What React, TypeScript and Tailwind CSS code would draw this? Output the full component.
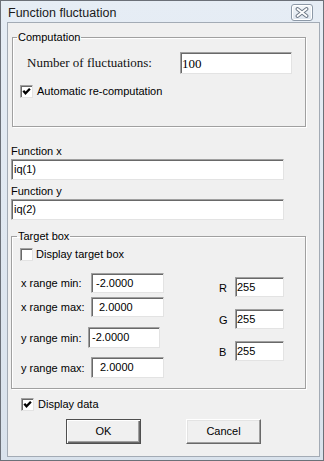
import React from "react";

const sans = { fontFamily: '"Liberation Sans", Arial, sans-serif' };

function Box({
  cls,
  value,
  pad,
  serif,
}: {
  cls: string;
  value: string;
  pad: string;
  serif?: boolean;
}) {
  return (
    <div
      className={`bg-white border border-[#e3e3e3] border-t-[#a0a0a0] border-l-[#a0a0a0] shadow-[inset_1px_1px_0_#696969] flex items-center text-black ${cls} ${pad} ${
        serif ? "text-[13px] font-['Liberation_Serif',serif]" : "text-[11px]"
      }`}
    >
      <span className="whitespace-pre leading-none">{value}</span>
    </div>
  );
}

function Check({ checked }: { checked: boolean }) {
  return (
    <span className="w-[13px] h-[13px] shrink-0 bg-white border border-[#e3e3e3] border-t-[#a0a0a0] border-l-[#a0a0a0] shadow-[inset_1px_1px_0_#696969] relative">
      {checked && (
        <svg
          className="absolute left-0 top-0"
          width="11"
          height="11"
          viewBox="0 0 11 11"
        >
          <path
            d="M2.3 4.8 L4.5 7.3 L8.9 2.7"
            fill="none"
            stroke="#000"
            strokeWidth="2.3"
          />
        </svg>
      )}
    </span>
  );
}

export default function App() {
  return (
    <div
      style={sans}
      className="w-[324px] h-[461px] border border-[#6b7078] bg-gradient-to-b from-[#e6edf5] to-[#d9e2ec] flex flex-col text-[11px] text-black"
    >
      {/* title bar */}
      <div className="h-[21px] shrink-0 flex items-start justify-between pl-[7px] pr-[10px]">
        <span className="pt-[5px] text-[12.5px] leading-[15px] text-[#1a1a1a]">
          Function fluctuation
        </span>
        <div className="mt-[3px] w-[22px] h-[17px] rounded-[3px] border border-[#8d99a7] bg-gradient-to-b from-[#f4f7fa] to-[#dde5ee] shadow-[inset_0_0_0_1px_#ffffff] flex items-center justify-center">
          <svg width="14" height="11" viewBox="0 0 14 11">
            <path
              d="M2.5 2 L11.5 9 M11.5 2 L2.5 9"
              stroke="#6f7a88"
              strokeWidth="3.8"
              strokeLinecap="round"
            />
            <path
              d="M2.5 2 L11.5 9 M11.5 2 L2.5 9"
              stroke="#ffffff"
              strokeWidth="1.8"
              strokeLinecap="round"
            />
          </svg>
        </div>
      </div>

      {/* content */}
      <div className="ml-[6px] mr-[3px] mb-[3px] flex-1 border border-[#a3abb5] bg-[#f0f0f0] flex flex-col">
        {/* Computation */}
        <fieldset className="mt-[7px] ml-[4px] w-[294px] h-[97px] border border-[#a0a0a0] shadow-[inset_1px_1px_0_#ffffff,1px_1px_0_#ffffff] shrink-0">
          <legend className="ml-[4px] px-[1px] leading-[14px] text-[11px]">
            Computation
          </legend>
          <div className="mt-[8px] flex items-center pl-[14px]">
            <span className="w-[153px] text-[13px] font-['Liberation_Serif',serif] leading-[16px] text-[#111]">
              Number of fluctuations:
            </span>
            <Box cls="w-[112px] h-[22px]" value="100" pad="pl-[1px] pt-[1px]" serif />
          </div>
          <div className="mt-[11px] flex items-center h-[13px] pl-[7px] gap-[4px]">
            <Check checked />
            <span className="leading-[13px]">Automatic re-computation</span>
          </div>
        </fieldset>

        {/* Function x / y */}
        <div className="pl-[3px] shrink-0">
          <div className="mt-[17px] leading-[14px]">Function x</div>
          <Box cls="mt-[1px] w-[273px] h-[21px]" value="iq(1)" pad="pl-[2px]" />
          <div className="mt-[4px] leading-[14px]">Function y</div>
          <Box cls="mt-[1px] w-[273px] h-[21px]" value="iq(2)" pad="pl-[2px]" />
        </div>

        {/* Target box */}
        <fieldset className="mt-[9px] ml-[3px] w-[295px] h-[160px] border border-[#a0a0a0] shadow-[inset_1px_1px_0_#ffffff,1px_1px_0_#ffffff] shrink-0">
          <legend className="ml-[5px] px-[1px] leading-[14px] text-[11px]">
            Target box
          </legend>
          <div className="mt-[5px] flex items-center h-[13px] pl-[8px] gap-[3px]">
            <Check checked={false} />
            <span className="leading-[13px]">Display target box</span>
          </div>
          <div className="mt-[12px] flex items-start">
            <div className="pl-[9px] flex flex-col">
              <div className="flex items-center">
                <span className="w-[70px] pt-[1px]">x range min:</span>
                <Box cls="w-[73px] h-[20px]" value="-2.0000" pad="pl-[4px]" />
              </div>
              <div className="mt-[4px] flex items-center">
                <span className="w-[70px] pt-[1px]">x range max:</span>
                <Box cls="w-[73px] h-[20px]" value="2.0000" pad="pl-[7px]" />
              </div>
              <div className="mt-[10px] flex items-center">
                <span className="w-[67px] pt-[1px]">y range min:</span>
                <Box cls="w-[72px] h-[21px]" value="-2.0000" pad="pl-[3px]" />
              </div>
              <div className="mt-[9px] flex items-center">
                <span className="w-[70px] pt-[1px]">y range max:</span>
                <Box cls="w-[73px] h-[21px]" value="2.0000" pad="pl-[8px]" />
              </div>
            </div>
            <div className="ml-[55px] pt-[4px] flex flex-col">
              <div className="flex items-center">
                <span className="w-[16px] pt-[2px]">R</span>
                <Box cls="w-[49px] h-[20px]" value="255" pad="pl-[1px]" />
              </div>
              <div className="mt-[12px] flex items-center">
                <span className="w-[16px] pt-[2px]">G</span>
                <Box cls="w-[49px] h-[20px]" value="255" pad="pl-[1px]" />
              </div>
              <div className="mt-[12px] flex items-center">
                <span className="w-[16px] pt-[2px]">B</span>
                <Box cls="w-[49px] h-[20px]" value="255" pad="pl-[1px]" />
              </div>
            </div>
          </div>
        </fieldset>

        {/* Display data */}
        <div className="mt-[9px] flex items-center h-[13px] pl-[13px] gap-[4px] shrink-0">
          <Check checked />
          <span className="leading-[13px]">Display data</span>
        </div>

        {/* Buttons */}
        <div className="mt-[8px] flex pl-[58px] gap-[45px] shrink-0">
          <button className="w-[75px] h-[25px] bg-[#f0f0f0] border border-[#4f4f4f] shadow-[inset_1px_1px_0_#ffffff,inset_-1px_-1px_0_#696969,inset_-2px_-2px_0_#a0a0a0] text-[11px] text-black">
            OK
          </button>
          <button className="w-[75px] h-[25px] bg-[#f0f0f0] border border-[#696969] border-t-white border-l-white shadow-[inset_-1px_-1px_0_#a0a0a0,inset_1px_1px_0_#e3e3e3] text-[11px] text-black">
            Cancel
          </button>
        </div>
      </div>
    </div>
  );
}
